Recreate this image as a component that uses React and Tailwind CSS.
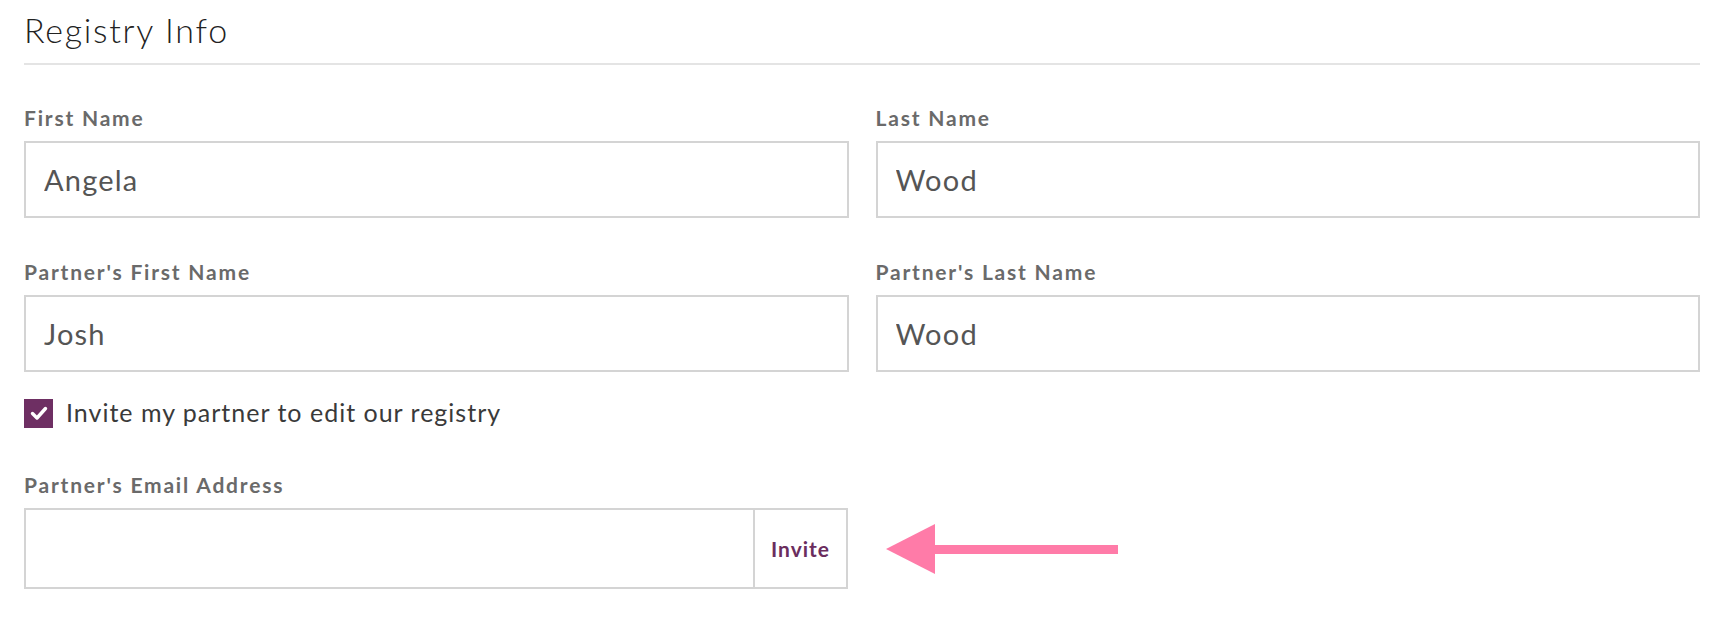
import React, { useState } from "react";

function Field({ label, value, onChange }) {
  return (
    <div className="flex flex-col">
      <label className="h-[24px] leading-[24px] text-[21px] font-bold tracking-[1.8px] text-[#6a6a6a] mb-[11px]">{label}</label>
      <input
        className="h-[77px] w-full border-2 border-[#d4d4d4] px-[18px] text-[29px] tracking-[1.2px] text-[#555555] outline-none"
        value={value}
        onChange={onChange}
      />
    </div>
  );
}

export default function App() {
  const [form, setForm] = useState({ first: "Angela", last: "Wood", pFirst: "Josh", pLast: "Wood", email: "" });
  const [invite, setInvite] = useState(true);
  const set = (key) => (e) => setForm({ ...form, [key]: e.target.value });

  return (
    <div className="w-[1728px] h-[618px] bg-white pl-[24px] pr-[28px] font-['Lato',sans-serif]">
      <div className="pt-[11px] pb-[15px] border-b-2 border-[#e4e4e4]">
        <h1 className="h-[37px] leading-[37px] text-[34px] font-light text-[#222222] tracking-[1.7px]">Registry Info</h1>
      </div>

      <div className="grid grid-cols-2 gap-x-[27px] gap-y-[42px] mt-[41px]">
        <Field label="First Name" value={form.first} onChange={set("first")} />
        <Field label="Last Name" value={form.last} onChange={set("last")} />
        <Field label="Partner's First Name" value={form.pFirst} onChange={set("pFirst")} />
        <Field label="Partner's Last Name" value={form.pLast} onChange={set("pLast")} />
      </div>

      <label className="flex items-center gap-[13px] mt-[26px] h-[30px] cursor-pointer">
        <input type="checkbox" className="hidden" checked={invite} onChange={() => setInvite(!invite)} />
        <span className="w-[29px] h-[29px] bg-[#6e2f63] flex items-center justify-center">
          {invite && (
            <svg width="18" height="18" viewBox="0 0 18 18">
              <path d="M2.5 9.5 L7 14 L15.5 4.5" fill="none" stroke="white" strokeWidth="3.4" strokeLinecap="round" strokeLinejoin="round" />
            </svg>
          )}
        </span>
        <span className="text-[25px] text-[#3a3a3a] tracking-[1px]">Invite my partner to edit our registry</span>
      </label>

      <div className="mt-[45px]">
        <label className="block h-[24px] leading-[24px] text-[21px] font-bold tracking-[1.8px] text-[#6a6a6a] mb-[11px]">Partner's Email Address</label>
        <div className="flex items-center">
          <div className="flex w-[824px] h-[81px] border-2 border-[#d4d4d4]">
            <input
              className="flex-1 px-[18px] text-[29px] tracking-[1.2px] text-[#555555] outline-none"
              value={form.email}
              onChange={set("email")}
            />
            <button className="w-[93px] border-l-2 border-[#d4d4d4] text-[21px] font-bold tracking-[1px] text-[#6b2d5e]">Invite</button>
          </div>
          <svg className="ml-[38px]" width="232" height="50" viewBox="0 0 232 50">
            <polygon points="0,25 49,0 49,50" fill="#ff7ba8" />
            <rect x="45" y="21" width="187" height="9" fill="#ff7ba8" />
          </svg>
        </div>
      </div>
    </div>
  );
}
